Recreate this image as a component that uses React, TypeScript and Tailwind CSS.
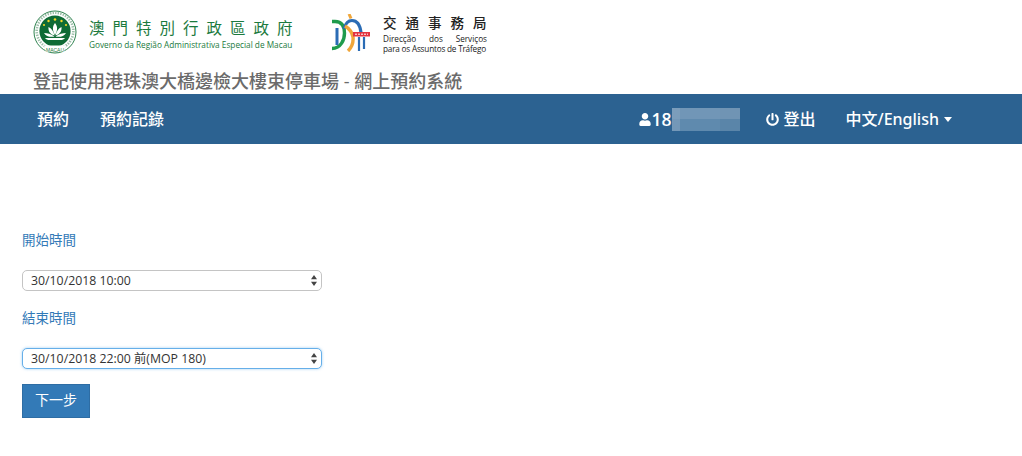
import React from "react";
import { FaUser, FaPowerOff } from "react-icons/fa";

const MacauLogo = () => (
  <svg width="44" height="44" viewBox="0 0 44 44" className="shrink-0">
    <circle cx="22" cy="22" r="21" fill="#fff" stroke="#2f8350" strokeWidth="1" />
    <circle cx="22" cy="21" r="18.300" fill="none" stroke="#9dbfa9" strokeWidth="2.600" strokeDasharray="1.400 1.200" />
    <circle cx="22" cy="21" r="15.600" fill="#0e6b35" />
    <path d="M22 13c2.500 3 3 7 0 12-3-5-2.500-9 0-12z" fill="#fff" />
    <path d="M15.500 17c3 1.500 5 4 6 8.500-4-1-6.500-4-6-8.500zM28.500 17c-3 1.500-5 4-6 8.500 4-1 6.500-4 6-8.500z" fill="#fff" />
    <path d="M11 23c3 0 7.500 1 10.500 3.500-4 1-8.500 0-10.500-3.500zM33 23c-3 0-7.500 1-10.500 3.500 4 1 8.500 0 10.500-3.500z" fill="#fff" />
    <path d="M12 28h20c-1 1-1.500 1.500-3 2H15c-1.500-.5-2-1-3-2z" fill="#fff" />
    <g fill="#f3d624">
      <circle cx="22" cy="9.500" r="1.300" />
      <circle cx="15.500" cy="11" r="1.200" />
      <circle cx="28.500" cy="11" r="1.200" />
      <circle cx="11" cy="15" r="1.100" />
      <circle cx="33" cy="15" r="1.100" />
    </g>
    <path d="M11 35.500h22l-2 6.500H13z" fill="#fff" />
    <text x="22" y="41.500" textAnchor="middle" fontSize="5" fill="#1f7a3d" fontFamily="Liberation Sans">MACAU</text>
  </svg>
);

const DstLogo = () => (
  <svg width="38" height="38" viewBox="0 0 38 38" className="shrink-0">
    <path d="M0 7.500h3c7 0 9.500 5 9.500 11.500S9 34.500 0 34.500" fill="none" stroke="#1f9b4c" strokeWidth="3.400" />
    <path d="M5 14v17" fill="none" stroke="#2b6cb5" strokeWidth="3" />
    <path d="M12 15c1.500-6 4-8.500 8-8.500 5 0 8 4 9 12" fill="none" stroke="#2b6cb5" strokeWidth="3.200" />
    <path d="M17 0l2 4.500" fill="none" stroke="#f0a63a" strokeWidth="3" />
    <path d="M13 12c5 3 7 6 8 11 .5 5-1 10-5 14" fill="none" stroke="#f0a63a" strokeWidth="3.400" />
    <path d="M27 23v14M32 23v12" stroke="#2b6cb5" strokeWidth="2.200" />
    <path d="M21 18h17v4.500H21z" fill="#e3333f" />
    <path d="M23 20.200h13" stroke="#fff" strokeWidth="1" strokeDasharray="2 1" />
  </svg>
);

const SelectArrows = () => (
  <svg width="6" height="11" viewBox="0 0 6 11" className="absolute right-[5px] top-[5px] pointer-events-none">
    <path d="M3 0l3 4.300H0zM3 11L0 6.700h6z" fill="#444" />
  </svg>
);

const redacted = [
  "bg-[#7b9dbb]",
  "bg-[#7196b7]",
  "bg-[#7094b4]",
  "bg-[#7498b8]",
  "bg-[#5f8aae]",
  "bg-[#5a85a9]",
];

const App: React.FC = () => {
  return (
    <div className="w-[1022px] h-[456px] bg-white overflow-hidden font-['Open_Sans','Noto_Sans_CJK_TC',sans-serif] text-[#333]">
      <div className="h-[94px] flex flex-col">
        <div className="flex items-center pl-[33px] pt-[10px]">
          <MacauLogo />
          <div className="ml-[12px] pt-[4px] w-[206px] shrink-0 text-[#1b7a3e]">
            <div className="text-[15.500px] leading-[20px] tracking-[8px] whitespace-nowrap">澳門特別行政區政府</div>
            <div className="text-[8.250px] leading-[10px] mt-[2px] whitespace-nowrap">Governo da Região Administrativa Especial de Macau</div>
          </div>
          <div className="ml-[37px] pt-[2px]">
            <DstLogo />
          </div>
          <div className="ml-[13px] pt-[3px] w-[104px] shrink-0 text-[#222]">
            <div className="text-[13.500px] leading-[18px] font-medium tracking-[9px] whitespace-nowrap">交通事務局</div>
            <div className="text-[8.200px] leading-[9.500px] mt-[2px] flex justify-between">
              <span>Direcção</span>
              <span>dos</span>
              <span>Serviços</span>
            </div>
            <div className="text-[8.200px] leading-[9.500px] whitespace-nowrap tracking-[-0.2px]">para os Assuntos de Tráfego</div>
          </div>
        </div>
        <h1 className="pl-[33px] mt-[15px] text-[18px] leading-[24px] font-medium text-[#6b6b6b] whitespace-nowrap">
          登記使用港珠澳大橋邊檢大樓束停車場 - 網上預約系統
        </h1>
      </div>

      <nav className="h-[50px] bg-[#2c6291] flex items-center justify-between text-white text-[16px] font-medium pl-[37px] pr-[70px]">
        <div className="flex items-center gap-[31px]">
          <span>預約</span>
          <span>預約記錄</span>
        </div>
        <div className="flex items-center">
          <FaUser className="w-[12px] h-[13px]" />
          <span className="text-[17.500px] font-semibold">18</span>
          <div className="w-[68px] h-[23px] grid grid-cols-[8px_40px_20px] grid-rows-2">
            {redacted.map((c, i) => (
              <div key={i} className={c} />
            ))}
          </div>
          <FaPowerOff className="ml-[26px] w-[13px] h-[13px]" />
          <span className="ml-[5px]">登出</span>
          <span className="ml-[30px] font-['Noto_Sans','Noto_Sans_CJK_TC',sans-serif]">中文/English</span>
          <span className="ml-[5px] w-0 h-0 border-x-[4.500px] border-x-transparent border-t-[5px] border-t-white" />
        </div>
      </nav>

      <main className="pl-[22px] pt-[87px]">
        <label className="block text-[13.500px] leading-[18px] text-[#337ab7]">開始時間</label>
        <div className="relative w-[300px] mt-[21px]">
          <select
            defaultValue="a"
            className="block w-full h-[21px] appearance-none bg-white border border-[#c4c4c4] rounded-[5px] pl-[8px] text-[12.300px] leading-[18px] text-[#333] outline-none"
          >
            <option value="a">30/10/2018 10:00</option>
          </select>
          <SelectArrows />
        </div>
        <label className="block mt-[18px] text-[13.500px] leading-[18px] text-[#337ab7]">結束時間</label>
        <div className="relative w-[300px] mt-[21px]">
          <select
            defaultValue="b"
            className="block w-full h-[21px] appearance-none bg-white border border-[#66afe9] rounded-[5px] pl-[8px] text-[12.300px] leading-[18px] text-[#333] outline-none shadow-[0_0_3px_rgba(102,175,233,0.6)]"
          >
            <option value="b">30/10/2018 22:00 前(MOP 180)</option>
          </select>
          <SelectArrows />
        </div>
        <button className="block mt-[15px] w-[68px] h-[34px] pb-[3px] bg-[#337ab7] border border-[#2e6da4] text-white text-[14px]">
          下一步
        </button>
      </main>
    </div>
  );
};

export default App;
